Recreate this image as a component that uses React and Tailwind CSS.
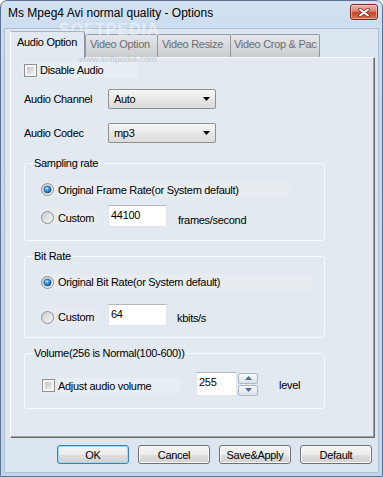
import React from "react";

function Radio({ checked, id }) {
  return (
    <svg width="13" height="13" viewBox="0 0 13 13" className="shrink-0">
      <defs>
        <linearGradient id={`rb${id}`} x1="0" y1="0" x2="1" y2="1">
          <stop offset="0" stopColor="#c9ccd0" />
          <stop offset="1" stopColor="#f8f8f8" />
        </linearGradient>
        <radialGradient id={`rd${id}`} cx="0.4" cy="0.35" r="0.65">
          <stop offset="0" stopColor="#c4ecff" />
          <stop offset="0.45" stopColor="#3a9ae0" />
          <stop offset="1" stopColor="#164f86" />
        </radialGradient>
      </defs>
      <circle cx="6.5" cy="6.5" r="6" fill={`url(#rb${id})`} stroke="#8a8e93" />
      {checked && (
        <circle cx="6.5" cy="6.5" r="3.6" fill={`url(#rd${id})`} stroke="#1f4f7c" strokeWidth="0.6" />
      )}
    </svg>
  );
}

function Check() {
  return (
    <div className="w-[13px] h-[13px] shrink-0 border border-[#8f8f8f] bg-[#f6f6f6] p-[2px]">
      <div className="w-full h-full bg-[linear-gradient(135deg,#bfc3c9,#eef0f2)]" />
    </div>
  );
}

function Combo({ value }) {
  return (
    <div className="w-[108px] h-[20px] rounded-[2px] border border-[#8e8f8f] bg-[linear-gradient(#f7f7f7,#ececec_40%,#e4e4e4_60%,#dcdcdc)] flex items-center justify-between pl-[5px] pr-[5px]">
      <span>{value}</span>
      <svg width="7" height="4" viewBox="0 0 7 4">
        <path d="M0 0h7L3.5 4z" fill="#000" />
      </svg>
    </div>
  );
}

function TextBox({ value, w }) {
  return (
    <div className={`${w} h-full bg-white border border-[#e2e6eb] border-t-[#b5b9bf] pl-[2px] pt-[2px] leading-[14px]`}>
      {value}
    </div>
  );
}

function Btn({ children, focused }) {
  return (
    <div
      className={`w-[72px] h-[19px] rounded-[3px] border flex items-center justify-center bg-[linear-gradient(#f4f4f4,#ececec_50%,#dedede_50%,#d2d2d2)] ${
        focused
          ? "border-[#3c7fb1] shadow-[inset_0_0_0_1px_#98dcf8]"
          : "border-[#707070] shadow-[inset_0_0_0_1px_#fbfbfb]"
      }`}
    >
      {children}
    </div>
  );
}

function Group({ title, children, className }) {
  return (
    <fieldset className={`ml-[1px] w-[301px] border border-[#f7f9fb] rounded-[3px] pl-[8px] ${className}`}>
      <legend className="px-[1px] leading-[14px]">{title}</legend>
      <div className="pl-[8px]">{children}</div>
    </fieldset>
  );
}

export default function App() {
  return (
    <div className="relative w-[383px] h-[477px] bg-[linear-gradient(#d3e2f2,#c6d8ec_60px,#c3d5ea)] border border-[#5b7493] rounded-t-[7px] flex flex-col text-[11px] leading-[14px] tracking-[-0.3px] text-black font-['Liberation_Sans',Arial,sans-serif] overflow-hidden">
      {/* Title bar */}
      <div className="h-[27px] flex justify-between items-start shrink-0">
        <div className="ml-[7px] mt-[5px] text-[12px] leading-[15px] tracking-normal">Ms Mpeg4 Avi normal quality - Options</div>
        <div className="mt-[3px] mr-[4px] w-[28px] h-[16px] rounded-[3px] border border-[#7a2a1f] bg-[linear-gradient(#f0b4a6,#e08a76_40%,#c84a32_55%,#d76a4e)] shadow-[inset_0_0_0_1px_rgba(255,220,210,0.5)] flex items-center justify-center">
          <svg width="12" height="9" viewBox="0 0 12 9">
            <path d="M2 1.5l8 6M10 1.5l-8 6" stroke="#6a261c" strokeWidth="3.4" strokeLinecap="round" />
            <path d="M2 1.5l8 6M10 1.5l-8 6" stroke="#fff" strokeWidth="2" strokeLinecap="round" />
          </svg>
        </div>
      </div>

      {/* Client */}
      <div className="ml-[3px] mr-[3px] mb-[3px] flex-1 bg-[#dce6f0] border border-[#aebfd3] flex flex-col">
        {/* Tabs */}
        <div className="h-[28px] pl-[5px] flex items-end shrink-0">
          <div className="relative z-10 w-[75px] h-[27px] -mb-[1px] bg-[#e2e9f1] border border-b-0 border-l-white border-t-[#a9b4c0] border-r-[#8c959f] rounded-t-[2px] pl-[6px] pt-[3px]">
            Audio Option
          </div>
          <div className="w-[73px] h-[23px] bg-[linear-gradient(#e4e7eb,#c9cdd2)] border border-b-0 border-[#939aa3] rounded-t-[2px] pl-[4px] pt-[2px] text-[#6a6d71]">
            Video Option
          </div>
          <div className="w-[73px] h-[23px] bg-[linear-gradient(#e4e7eb,#c9cdd2)] border border-b-0 border-l-0 border-[#939aa3] rounded-t-[2px] pl-[4px] pt-[2px] text-[#6a6d71]">
            Video Resize
          </div>
          <div className="w-[89px] h-[23px] bg-[linear-gradient(#e4e7eb,#c9cdd2)] border border-b-0 border-l-0 border-[#939aa3] rounded-t-[2px] pl-[3px] pt-[2px] text-[#6a6d71] overflow-hidden whitespace-nowrap">
            Video Crop &amp; Pac
          </div>
        </div>

        {/* Tab page */}
        <div className="ml-[5px] w-[365px] h-[381px] shrink-0 bg-[#e2e9f1] border border-l-white border-t-white border-r-[#6a6a6a] border-b-[#6a6a6a] shadow-[inset_-1px_-1px_0_#a0a0a0] pl-[12px] flex flex-col">
          {/* Disable Audio */}
          <div className="mt-[4px] w-[115px] h-[16px] bg-[#e8eef5] flex items-center pl-[1px] gap-[3px]">
            <Check />
            <span>Disable Audio</span>
          </div>

          <div className="mt-[11px] h-[20px] flex items-center">
            <div className="w-[85px] pl-[1px]">Audio Channel</div>
            <Combo value="Auto" />
          </div>
          <div className="mt-[14px] h-[20px] flex items-center">
            <div className="w-[85px] pl-[1px]">Audio Codec</div>
            <Combo value="mp3" />
          </div>

          {/* Sampling rate */}
          <Group title="Sampling rate" className="mt-[13px] pt-[12px] pb-[13px]">
            <div className="w-[249px] h-[15px] bg-[#e8ecf1] flex items-center gap-[4px]">
              <Radio checked id="a" />
              <span>Original Frame Rate(or System default)</span>
            </div>
            <div className="mt-[8px] h-[22px] flex items-start">
              <div className="mt-[5px] w-[57px] h-[15px] bg-[#e8ecf1] flex items-center gap-[4px]">
                <Radio id="b" />
                <span>Custom</span>
              </div>
              <div className="ml-[10px] h-full">
                <TextBox value="44100" w="w-[59px]" />
              </div>
              <div className="ml-[11px] mt-[8px]">frames/second</div>
            </div>
          </Group>

          {/* Bit Rate */}
          <Group title="Bit Rate" className="mt-[8px] pt-[11px] pb-[11px]">
            <div className="w-[271px] h-[16px] bg-[#e8ecf1] flex items-center gap-[4px]">
              <Radio checked id="c" />
              <span>Original Bit Rate(or System default)</span>
            </div>
            <div className="mt-[14px] h-[22px] flex items-start">
              <div className="mt-[5px] w-[57px] h-[16px] bg-[#e8ecf1] flex items-center gap-[4px]">
                <Radio id="d" />
                <span>Custom</span>
              </div>
              <div className="ml-[10px] h-full">
                <TextBox value="64" w="w-[59px]" />
              </div>
              <div className="ml-[10px] mt-[7px]">kbits/s</div>
            </div>
          </Group>

          {/* Volume */}
          <Group title="Volume(256 is Normal(100-600))" className="mt-[8px] pt-[12px] pb-[12px]">
            <div className="h-[24px] flex items-start">
              <div className="mt-[6px] w-[139px] h-[15px] bg-[#e8eef5] flex items-center gap-[3px] pl-[1px]">
                <Check />
                <span>Adjust audio volume</span>
              </div>
              <div className="ml-[16px] h-full">
                <TextBox value="255" w="w-[41px]" />
              </div>
              <div className="w-[21px] h-full flex flex-col justify-center gap-[1px] pl-[1px]">
                <div className="h-[11px] border border-[#a9b7c6] rounded-[2px] bg-[linear-gradient(#f7f8fa,#dfe4ea)] flex items-center justify-center">
                  <svg width="7" height="4" viewBox="0 0 7 4">
                    <path d="M0 4h7L3.5 0z" fill="#4c6d93" />
                  </svg>
                </div>
                <div className="h-[11px] border border-[#a9b7c6] rounded-[2px] bg-[linear-gradient(#f7f8fa,#dfe4ea)] flex items-center justify-center">
                  <svg width="7" height="4" viewBox="0 0 7 4">
                    <path d="M0 0h7L3.5 4z" fill="#4c6d93" />
                  </svg>
                </div>
              </div>
              <div className="ml-[21px] mt-[6px]">level</div>
            </div>
          </Group>
        </div>

        {/* Buttons */}
        <div className="mt-[7px] flex justify-end gap-[9px] pr-[6px]">
          <Btn focused>OK</Btn>
          <Btn>Cancel</Btn>
          <Btn>Save&amp;Apply</Btn>
          <Btn>Default</Btn>
        </div>
      </div>

      {/* Watermark */}
      <div className="absolute left-[58px] top-[22px] text-[16px] leading-[14px] font-bold tracking-[1px] text-white/45 pointer-events-none">
        SOFTPEDIA
      </div>
      <div className="absolute left-[78px] top-[54px] text-[9px] leading-[9px] tracking-normal text-[#9aa4ae]/50 pointer-events-none">
        www.softpedia.com
      </div>
    </div>
  );
}
